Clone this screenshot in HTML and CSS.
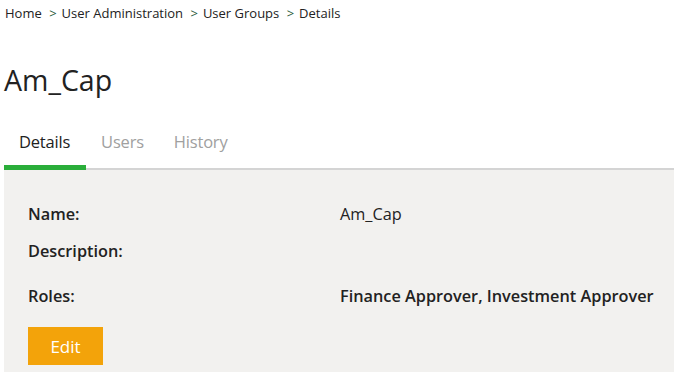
FILE: index.html
```html
<!DOCTYPE html>
<html>
<head>
<meta charset="utf-8">
<link rel="stylesheet" href="styles.css">
</head>
<body>
<div class="page">
  <nav class="crumbs">
    <span class="crumb">Home</span>
    <span class="sep">&gt;</span><span class="crumb">User Administration</span>
    <span class="sep">&gt;</span><span class="crumb">User Groups</span>
    <span class="sep">&gt;</span><span class="crumb">Details</span>
  </nav>
  <h1 class="title">Am_Cap</h1>
  <div class="tabs">
    <div class="tab active">Details</div>
    <div class="tab">Users</div>
    <div class="tab">History</div>
    <div class="tab-fill"></div>
  </div>
  <div class="panel">
    <div class="row row-name">
      <div class="label">Name:</div>
      <div class="value">Am_Cap</div>
    </div>
    <div class="row row-desc">
      <div class="label">Description:</div>
      <div class="value"></div>
    </div>
    <div class="row row-roles">
      <div class="label">Roles:</div>
      <div class="value strong">Finance Approver, Investment Approver</div>
    </div>
    <button class="btn-edit">Edit</button>
  </div>
</div>
</body>
</html>
```
FILE: styles.css
```css
html, body {
  margin: 0;
  padding: 0;
  background: #ffffff;
}
body {
  font-family: "Open Sans", "Noto Sans", sans-serif;
  color: #333333;
}
.page {
  padding: 0 0 0 4px;
  height: 372px;
  overflow: hidden;
  display: flex;
  flex-direction: column;
}
.crumbs {
  font-size: 13px;
  line-height: 16px;
  padding: 5px 0 0 1px;
  color: #222;
}
.crumb { color: #222; }
.sep {
  color: #2a5a3a;
  margin: 0 5px 0 4px;
}
.title {
  margin: 0;
  padding: 42px 0 0 0;
  font-size: 28.5px;
  line-height: 34px;
  font-weight: 400;
  color: #222;
}
.tabs {
  display: flex;
  margin-top: 34px;
}
.tab {
  font-size: 16.5px;
  line-height: 22px;
  padding: 0 15px 15px 15px;
  color: #a0a0a0;
  border-bottom: 2px solid #d4d4d4;
  letter-spacing: -0.2px;
}
.tab.active {
  color: #222;
  border-bottom: 5px solid #2aae3a;
  padding-bottom: 12px;
  padding-right: 16px;
}
.tab-fill {
  flex: 1;
  border-bottom: 2px solid #d4d4d4;
}
.panel {
  flex: 1;
  background: #f2f1ef;
  padding: 34px 0 0 24px;
}
.row {
  display: flex;
  font-size: 16.3px;
  line-height: 20px;
}
.row-desc { margin-top: 17px; }
.row-roles { margin-top: 25px; }
.label {
  width: 312px;
  font-weight: 600;
  color: #222;
}
.value {
  color: #222;
}
.value.strong { font-weight: 600; }
.btn-edit {
  margin-top: 21px;
  width: 75px;
  height: 38px;
  border: 0;
  background: #f3a30a;
  color: #ffffff;
  font-family: "Open Sans", "Noto Sans", sans-serif;
  font-size: 17px;
  padding: 0;
  cursor: pointer;
}
```
